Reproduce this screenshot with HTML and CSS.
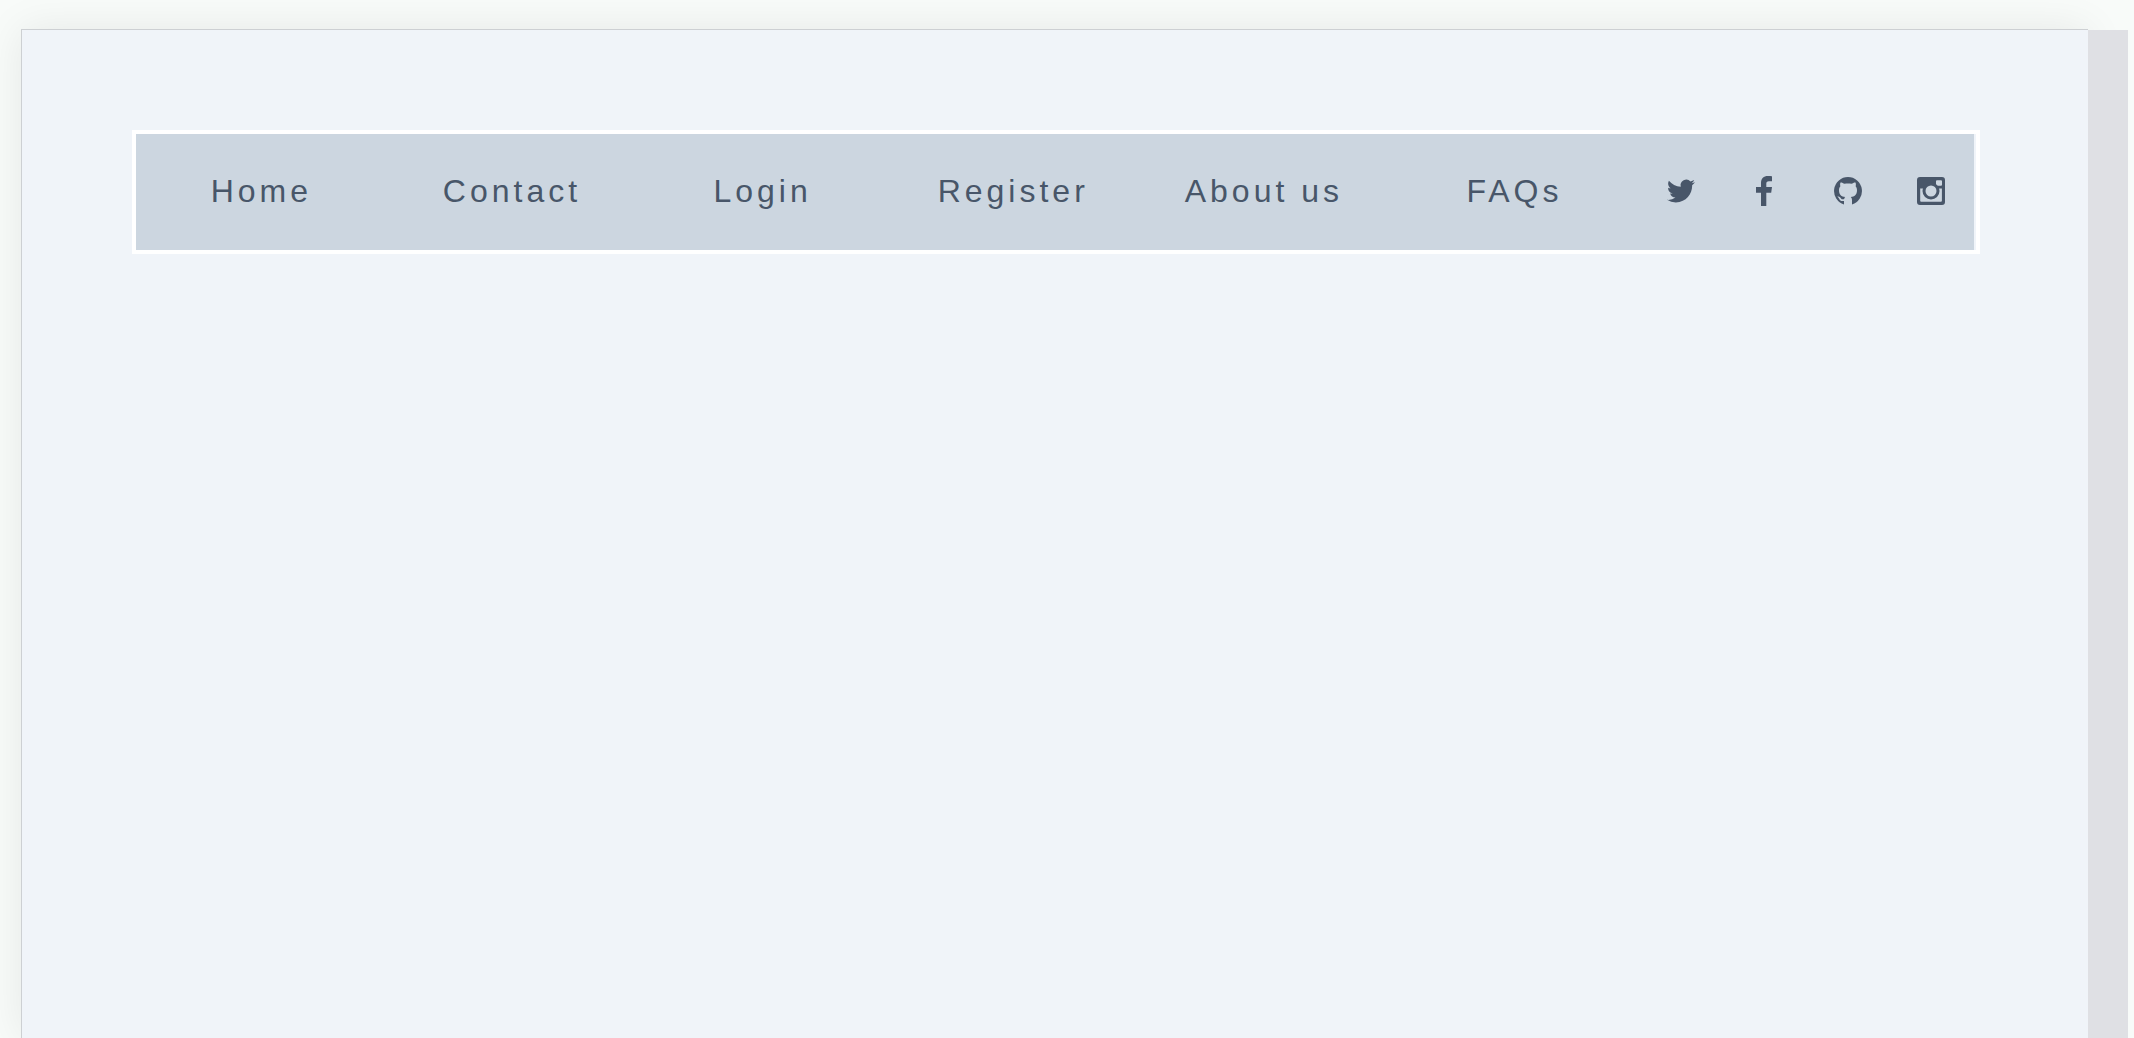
FILE: index.html
```html
<!DOCTYPE html>
<html lang="en">
<head>
<meta charset="utf-8">
<meta name="viewport" content="width=device-width, initial-scale=1">
<title>Navigation bar</title>
<link rel="stylesheet" href="styles.css">
</head>
<body>
<div class="window">
  <main class="page">
    <nav class="navbar" aria-label="Main">
      <a class="navbar-link" href="#home">Home</a>
      <a class="navbar-link" href="#contact">Contact</a>
      <a class="navbar-link" href="#login">Login</a>
      <a class="navbar-link" href="#register">Register</a>
      <a class="navbar-link" href="#about">About us</a>
      <a class="navbar-link" href="#faqs">FAQs</a>
      <a class="navbar-icon" href="#twitter" aria-label="Twitter">
        <svg width="28" height="28" viewBox="0 0 24 24"><path d="M23.953 4.57a10 10 0 01-2.825.775 4.958 4.958 0 002.163-2.723c-.951.555-2.005.959-3.127 1.184a4.92 4.92 0 00-8.384 4.482C7.69 8.095 4.067 6.13 1.64 3.162a4.822 4.822 0 00-.666 2.475c0 1.71.87 3.213 2.188 4.096a4.904 4.904 0 01-2.228-.616v.06a4.923 4.923 0 003.946 4.827 4.996 4.996 0 01-2.212.085 4.936 4.936 0 004.604 3.417 9.867 9.867 0 01-6.102 2.105c-.39 0-.779-.023-1.17-.067a13.995 13.995 0 007.557 2.209c9.053 0 13.998-7.496 13.998-13.985 0-.21 0-.42-.015-.63A9.935 9.935 0 0024 4.59z"/></svg>
      </a>
      <a class="navbar-icon" href="#facebook" aria-label="Facebook">
        <svg width="16" height="30" viewBox="0 0 16 30"><path d="M16 .3v4.900h-3c-2.200 0-2.700 1-2.700 2.600V11H16l-.8 5.700h-4.900V30H5V16.700H0V11h5V7.100C5 2.500 7.700 0 11.800 0c2 0 3.600.1 4.200.3z"/></svg>
      </a>
      <a class="navbar-icon" href="#github" aria-label="GitHub">
        <svg width="28" height="28" viewBox="0 0 28 28"><path d="M14 0A14 14 0 0 0 10 27.400V24C6.500 24.600 5.600 22.600 4.900 21.200 4.500 20.500 3.800 20 3.300 19.600 5.200 18.900 6.300 20.300 7 21.400 7.800 22.400 8.900 22.500 10.200 22 10.300 21 10.700 20.400 11.200 20 7.500 19.500 5 17.800 5 13.200c0-1.600.5-2.900 1.400-3.900C6 8.300 6 6.800 6.500 5.400c1.400-.1 2.800.6 4 1.400 2.300-.5 4.700-.5 7 0 1.200-.8 2.600-1.500 4-1.400.5 1.400.5 2.900.1 3.900.9 1 1.400 2.300 1.400 3.900 0 4.600-2.500 6.300-6.200 6.800.8.700 1.200 1.700 1.200 3v4.400A14 14 0 0 0 14 0z"/></svg>
      </a>
      <a class="navbar-icon" href="#instagram" aria-label="Instagram">
        <svg width="28" height="28" viewBox="0 0 28 28">
          <path fill-rule="evenodd" d="M3 0h22a3 3 0 013 3v22a3 3 0 01-3 3H3a3 3 0 01-3-3V3a3 3 0 013-3zM20 3.200a1 1 0 00-1 1v3.600a1 1 0 001 1h4a1 1 0 001-1V4.200a1 1 0 00-1-1zM3.200 11.500v12.200a1 1 0 001 1h19.700a1 1 0 001-1V11.500z"/>
          <circle class="lens" cx="14" cy="14" r="7"/>
        </svg>
      </a>
    </nav>
  </main>
  <div class="scroll-track"></div>
</div>
</body>
</html>
```
FILE: styles.css
```css
* {
  box-sizing: border-box;
}

body {
  margin: 0;
  background: #f8fbf9;
  color: #485669;
  font-family: "Liberation Sans", Arial, sans-serif;
}

.window {
  display: flex;
  min-height: 100vh;
  padding: 29px 6px 0 21px;
  overflow: hidden;
}

.page {
  flex: 1;
  padding: 100px 108px 100px 110px;
  border: solid #cdd0d3;
  border-width: 1px 0 0 1px;
  background: #f0f4f9;
  box-shadow: 0 0 40px rgba(0, 0, 0, 0.08);
}

.scroll-track {
  position: relative;
  width: 40px;
  margin-top: 1px;
  background: #dfe0e4;
}

.navbar {
  display: grid;
  grid-template-columns: repeat(6, 3fr) repeat(4, 1fr);
  align-items: center;
  height: 124px;
  padding-right: 2px;
  border: 4px solid #fff;
  background: linear-gradient(#ccd6e0, #ccd6e0) content-box, #f0f4f9;
}

.navbar-link {
  padding-bottom: 2px;
  color: inherit;
  font-size: 32px;
  line-height: 40px;
  letter-spacing: 4px;
  text-align: center;
  text-decoration: none;
  white-space: nowrap;
}

.navbar-icon {
  display: flex;
  justify-content: center;
  padding: 0 2px 2px 0;
}

.navbar-icon svg {
  fill: #485669;
}

.navbar-icon .lens {
  fill: #ccd6e0;
  stroke: #485669;
  stroke-width: 3;
}
```
